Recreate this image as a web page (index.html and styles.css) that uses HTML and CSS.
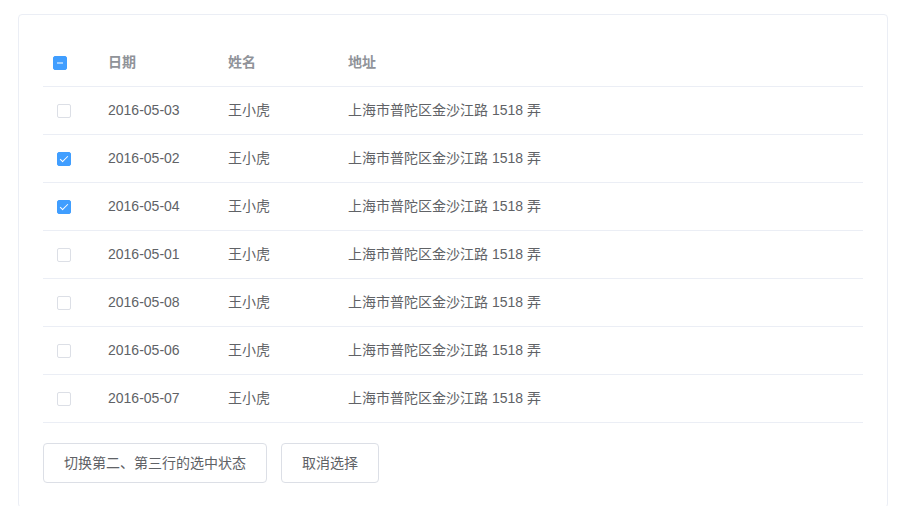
FILE: index.html
```html
<!DOCTYPE html>
<html lang="zh">
<head>
<meta charset="utf-8">
<link rel="stylesheet" href="styles.css">
</head>
<body>
<div class="card">
  <div class="table">
    <div class="row head">
      <div class="cell sel head-sel"><span class="cb indeterminate"></span></div>
      <div class="cell date">日期</div>
      <div class="cell name">姓名</div>
      <div class="cell addr">地址</div>
    </div>
    <div class="row">
      <div class="cell sel"><span class="cb"></span></div>
      <div class="cell date">2016-05-03</div>
      <div class="cell name">王小虎</div>
      <div class="cell addr">上海市普陀区金沙江路 1518 弄</div>
    </div>
    <div class="row">
      <div class="cell sel"><span class="cb checked"></span></div>
      <div class="cell date">2016-05-02</div>
      <div class="cell name">王小虎</div>
      <div class="cell addr">上海市普陀区金沙江路 1518 弄</div>
    </div>
    <div class="row">
      <div class="cell sel"><span class="cb checked"></span></div>
      <div class="cell date">2016-05-04</div>
      <div class="cell name">王小虎</div>
      <div class="cell addr">上海市普陀区金沙江路 1518 弄</div>
    </div>
    <div class="row">
      <div class="cell sel"><span class="cb"></span></div>
      <div class="cell date">2016-05-01</div>
      <div class="cell name">王小虎</div>
      <div class="cell addr">上海市普陀区金沙江路 1518 弄</div>
    </div>
    <div class="row">
      <div class="cell sel"><span class="cb"></span></div>
      <div class="cell date">2016-05-08</div>
      <div class="cell name">王小虎</div>
      <div class="cell addr">上海市普陀区金沙江路 1518 弄</div>
    </div>
    <div class="row">
      <div class="cell sel"><span class="cb"></span></div>
      <div class="cell date">2016-05-06</div>
      <div class="cell name">王小虎</div>
      <div class="cell addr">上海市普陀区金沙江路 1518 弄</div>
    </div>
    <div class="row">
      <div class="cell sel"><span class="cb"></span></div>
      <div class="cell date">2016-05-07</div>
      <div class="cell name">王小虎</div>
      <div class="cell addr">上海市普陀区金沙江路 1518 弄</div>
    </div>
  </div>
  <div class="actions">
    <button class="btn">切换第二、第三行的选中状态</button>
    <button class="btn">取消选择</button>
  </div>
</div>
</body>
</html>
```

FILE: styles.css
```css
* { box-sizing: border-box; }
html, body { margin: 0; padding: 0; background: #fff; }
body {
  padding: 14px 18px;
  font-family: "Liberation Sans", Arial, "Noto Sans CJK SC", sans-serif;
  font-size: 14px;
  color: #606266;
}
.card {
  width: 870px;
  border: 1px solid #ebeef5;
  border-radius: 4px;
  padding: 24px;
  background: #fff;
}
.table { width: 820px; }
.row {
  display: grid;
  grid-template-columns: 55px 120px 120px 1fr;
  border-bottom: 1px solid #ebeef5;
  height: 48px;
  align-items: center;
}
.cell {
  padding: 0 10px;
  line-height: 23px;
  white-space: nowrap;
}
.head .cell { color: #909399; font-weight: bold; }
.cell.sel { padding-left: 14px; display: flex; align-items: center; }
.cell.head-sel { padding-left: 10px; }
.cb {
  position: relative;
  display: inline-block;
  width: 14px;
  height: 14px;
  border: 1px solid #dcdfe6;
  border-radius: 2px;
  background: #fff;
}
.cb.checked, .cb.indeterminate {
  background: #409eff;
  border-color: #409eff;
}
.cb.checked::after {
  content: "";
  position: absolute;
  left: 4px;
  top: 1px;
  width: 3px;
  height: 7px;
  border: 1px solid #fff;
  border-left: 0;
  border-top: 0;
  transform: rotate(45deg);
}
.cb.indeterminate::before {
  content: "";
  position: absolute;
  left: 0;
  right: 0;
  top: 5px;
  height: 2px;
  background: #fff;
  transform: scale(0.5);
}
.actions {
  display: flex;
  gap: 14px;
  margin-top: 20px;
}
.btn {
  height: 40px;
  padding: 0 20px;
  border: 1px solid #dcdfe6;
  border-radius: 4px;
  background: #fff;
  color: #606266;
  font-family: "Liberation Sans", Arial, "Noto Sans CJK SC", sans-serif;
  font-size: 14px;
  line-height: 1;
  cursor: pointer;
}
```
